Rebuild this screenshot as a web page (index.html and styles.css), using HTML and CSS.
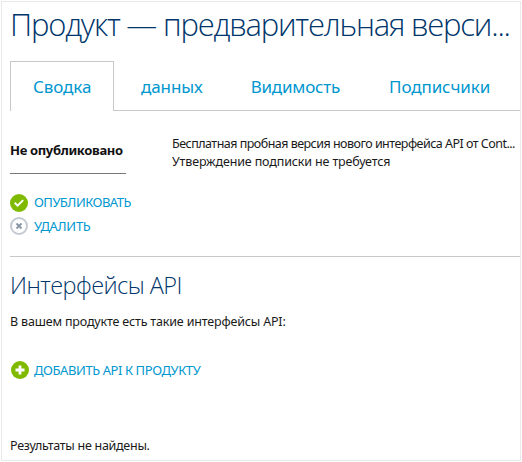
FILE: index.html
```html
<!DOCTYPE html>
<html lang="ru">
<head>
<meta charset="utf-8">
<title>Продукт</title>
<link rel="stylesheet" href="styles.css">
</head>
<body>
<main class="panel">
  <h1 class="title">Продукт — предварительная верси...</h1>
  <nav class="tabs">
    <a class="tab tab-active">Сводка</a>
    <a class="tab tab-data">данных</a>
    <a class="tab tab-visibility">Видимость</a>
    <a class="tab">Подписчики</a>
  </nav>
  <section class="summary">
    <div class="status">Не опубликовано</div>
    <div class="description">
      <p class="desc-main">Бесплатная пробная версия нового интерфейса API от Cont...</p>
      <p class="desc-note">Утверждение подписки не требуется</p>
    </div>
  </section>
  <div class="actions">
    <a class="action action-publish">
      <svg class="icon" viewBox="0 0 18 18"><circle cx="9" cy="9" r="9" fill="#7fba00"/><path d="M4.7 8.8l2.9 2.8 5.6-5.5" fill="none" stroke="#fff" stroke-width="2"/></svg>
      <span>ОПУБЛИКОВАТЬ</span>
    </a>
    <a class="action action-delete">
      <svg class="icon" viewBox="0 0 18 18"><circle cx="9" cy="9" r="8" fill="#fff" stroke="#c3cad1" stroke-width="2"/><path d="M6.5 6.5l5 5M11.5 6.5l-5 5" fill="none" stroke="#8795a3" stroke-width="1.8"/></svg>
      <span>УДАЛИТЬ</span>
    </a>
  </div>
  <section class="apis">
    <h2 class="subtitle">Интерфейсы API</h2>
    <p class="intro">В вашем продукте есть такие интерфейсы API:</p>
    <a class="action action-add">
      <svg class="icon" viewBox="0 0 18 18"><circle cx="9" cy="9" r="9" fill="#7fba00"/><path d="M9 4.5v9M4.5 9h9" fill="none" stroke="#fff" stroke-width="2.8"/></svg>
      <span>ДОБАВИТЬ API К ПРОДУКТУ</span>
    </a>
    <p class="empty">Результаты не найдены.</p>
  </section>
</main>
</body>
</html>
```
FILE: styles.css
```css
* { box-sizing: border-box; }
body {
  margin: 0;
  padding: 1px;
  background: #fff;
  color: #1a1a1a;
  font: 12.5px/18px "Noto Sans", "Open Sans", sans-serif;
}
h1, h2, p { margin: 0; }
.panel {
  width: 520px;
  height: 460px;
  padding-left: 8px;
  border: 1px solid #e9e9e9;
  white-space: nowrap;
  overflow: hidden;
}
.title {
  color: #00366b;
  font: 300 31px/44px "Open Sans", "Noto Sans", sans-serif;
  letter-spacing: -1.21px;
}
.tabs {
  display: flex;
  height: 50px;
  margin-top: 15px;
}
.tab {
  padding: 14px 24px 0;
  border-bottom: 1px solid #c8c8c8;
  color: #0097cf;
  font-size: 17px;
  line-height: 24px;
}
.tab:last-child {
  flex: 1;
  padding-left: 25px;
  letter-spacing: -0.1px;
}
.tab-active {
  width: 104px;
  padding: 13px 0 0 22px;
  border: 1px solid #c8c8c8;
  border-bottom: 0;
  letter-spacing: -0.1px;
}
.tab-data {
  padding-left: 27px;
  letter-spacing: -0.1px;
}
.tab-visibility { letter-spacing: -0.2px; }
.summary {
  display: flex;
  align-items: flex-start;
  height: 63px;
  padding-top: 23px;
}
.status {
  width: 116px;
  height: 40px;
  margin-right: 46px;
  padding-top: 7px;
  border-bottom: 1px solid #777;
  color: #111;
  font-size: 13px;
  font-weight: 700;
  letter-spacing: -0.34px;
}
.description { padding-top: 1px; }
.desc-main { letter-spacing: -0.52px; }
.desc-note { letter-spacing: -0.14px; }
.actions {
  height: 83px;
  padding-top: 20px;
  border-bottom: 1px solid #c8c8c8;
}
.action {
  display: flex;
  align-items: center;
  gap: 6px;
  height: 18px;
  color: #0097cf;
  font-size: 13px;
}
.icon { width: 18px; height: 18px; }
.action-publish {
  line-height: 16px;
  letter-spacing: -0.52px;
}
.action-publish span { padding-bottom: 2px; }
.action-delete { margin-top: 5px; letter-spacing: -0.3px; }
.subtitle {
  padding-top: 12px;
  color: #00366b;
  font: 300 23.5px/32px "Open Sans", "Noto Sans", sans-serif;
  letter-spacing: -0.55px;
}
.intro {
  margin-top: 12px;
  letter-spacing: -0.17px;
}
.action-add {
  margin: 30px 0 0 1px;
  gap: 5px;
  letter-spacing: -0.42px;
}
.empty {
  margin-top: 58px;
  letter-spacing: -0.28px;
}
```
